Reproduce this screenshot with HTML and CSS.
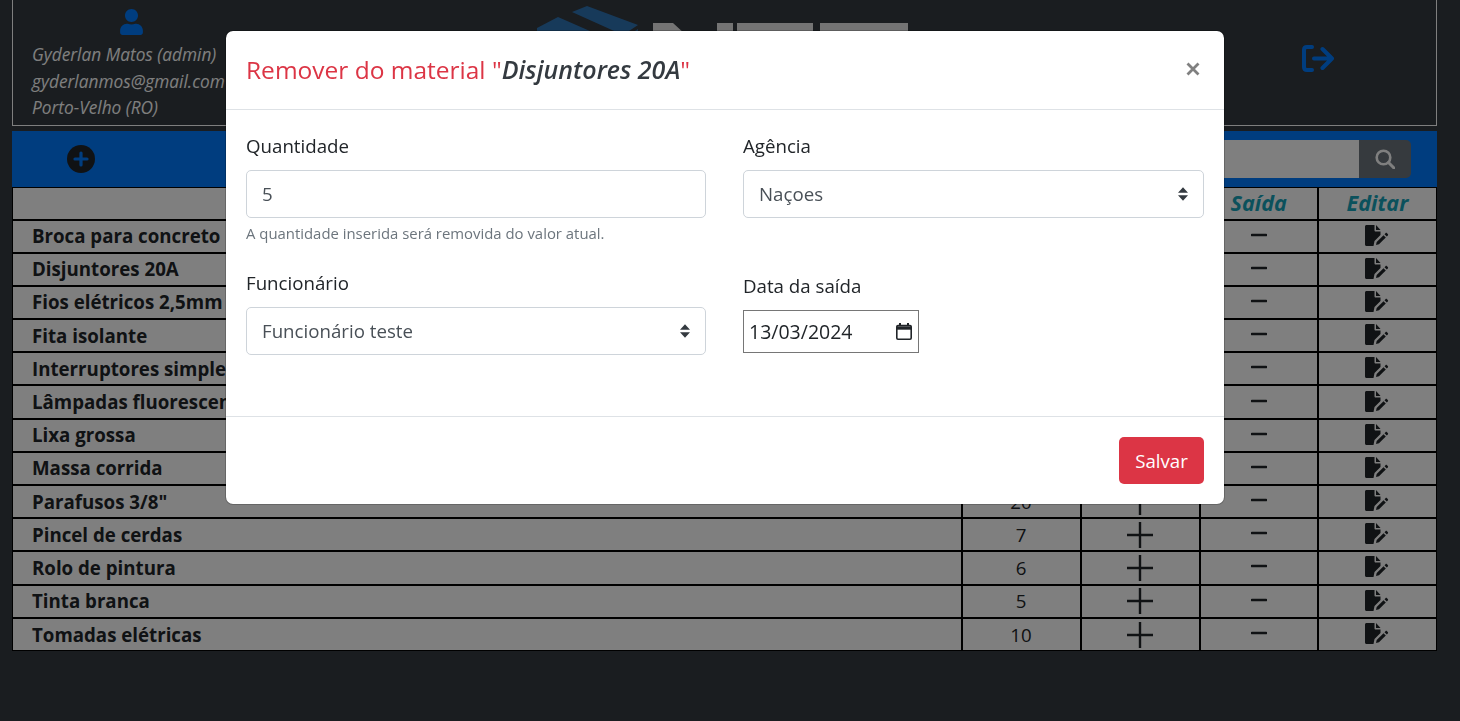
FILE: index.html
```html
<!DOCTYPE html>
<html lang="pt-BR">
<head>
    <meta charset="UTF-8">
    <meta name="viewport" content="width=device-width, initial-scale=1.0">
    <title>Materiais</title>
    <link rel="stylesheet" href="styles.css">
</head>
<body>

    <svg class="defs" aria-hidden="true">
        <symbol id="icon-plus" viewBox="0 0 26 26"><path d="M0 13H26M13 0V26" fill="none" stroke="currentColor" stroke-width="2.400"/></symbol>
        <symbol id="icon-minus" viewBox="0 0 16 4"><path d="M1 2H15" fill="none" stroke="currentColor" stroke-width="2.600" stroke-linecap="round"/></symbol>
        <symbol id="icon-edit" viewBox="0 0 24 21">
            <path d="M1.500 0H9.500V5.500C9.500 6 10 6.500 10.500 6.500H15.500V10L9.500 16L8.500 21H1.500C.7 21 0 20.300 0 19.500V1.500C0 .7 .7 0 1.500 0Z" fill="currentColor"/>
            <path d="M11 0L15.500 5H11Z" fill="currentColor"/>
            <path d="M11 20L11.700 17L18.500 10.200L20.800 12.500L14 19.300Z" fill="currentColor"/>
            <path d="M19.500 9.200L20.500 8.200C21 7.700 21.500 7.700 22 8.200L22.800 9C23.300 9.500 23.300 10 22.800 10.500L21.800 11.500Z" fill="currentColor"/>
        </symbol>
    </svg>

    <header class="top-box">
        <div class="user-info">
            <svg class="user-icon" viewBox="0 0 448 512"><path fill="currentColor" d="M224 256c70.700 0 128-57.300 128-128S294.700 0 224 0 96 57.300 96 128s57.300 128 128 128zm89.600 32h-16.700c-22.200 10.200-46.900 16-72.900 16s-50.600-5.800-72.900-16h-16.700C60.200 288 0 348.200 0 422.400V464c0 26.500 21.500 48 48 48h352c26.500 0 48-21.500 48-48v-41.600c0-74.200-60.200-134.400-134.400-134.400z"/></svg>
            <p>Gyderlan Matos (admin)</p>
            <p>gyderlanmos@gmail.com</p>
            <p>Porto-Velho (RO)</p>
        </div>
        <svg class="logo" viewBox="0 0 376 60" aria-label="Logo">
            <path fill="#2f74b5" d="M35 7L50 1L101 20L86 30Z"/>
            <path fill="#2f74b5" d="M0 23L21 12L62 30L40 50H0Z"/>
            <path fill="#2f74b5" d="M86 34L101 24V50H86Z"/>
            <path fill="#e8e8e8" d="M116 18H136L160 40H116ZM180 18H196V40H180ZM200 18H276V40H200ZM283 18H371V40H283Z"/>
        </svg>
        <svg class="logout-icon" viewBox="0 0 32 27">
            <path d="M10 2H5C3 2 2 3 2 5V22C2 24 3 25 5 25H10" fill="none" stroke="currentColor" stroke-width="4" stroke-linecap="round"/>
            <path d="M12 13.500H28M20.500 4L30 13.500L20.500 23" fill="none" stroke="currentColor" stroke-width="4" stroke-linecap="round" stroke-linejoin="round"/>
        </svg>
    </header>

    <div class="toolbar">
        <button class="add-btn" type="button" aria-label="Adicionar">
            <svg viewBox="0 0 28 28"><circle cx="14" cy="14" r="14" fill="currentColor"/><path d="M14 8V20M8 14H20" stroke="#007bff" stroke-width="3.200" stroke-linecap="round"/></svg>
        </button>
        <form class="search">
            <input type="text" aria-label="Buscar">
            <button type="button" aria-label="Buscar">
                <svg viewBox="0 0 20 20"><circle cx="8.500" cy="8.500" r="6.800" fill="none" stroke="currentColor" stroke-width="2.600"/><path d="M13.500 13.500L19 19" stroke="currentColor" stroke-width="3" stroke-linecap="round"/></svg>
            </button>
        </form>
    </div>

    <table class="materials">
        <thead>
            <tr><th>Material</th><th>Qtd</th><th>Entrada</th><th>Saída</th><th>Editar</th></tr>
        </thead>
        <tbody>
            <tr><td>Broca para concreto</td><td>12</td><td><svg class="plus"><use href="#icon-plus"/></svg></td><td><svg class="minus"><use href="#icon-minus"/></svg></td><td><svg class="edit"><use href="#icon-edit"/></svg></td></tr>
            <tr><td>Disjuntores 20A</td><td>15</td><td><svg class="plus"><use href="#icon-plus"/></svg></td><td><svg class="minus"><use href="#icon-minus"/></svg></td><td><svg class="edit"><use href="#icon-edit"/></svg></td></tr>
            <tr><td>Fios elétricos 2,5mm</td><td>30</td><td><svg class="plus"><use href="#icon-plus"/></svg></td><td><svg class="minus"><use href="#icon-minus"/></svg></td><td><svg class="edit"><use href="#icon-edit"/></svg></td></tr>
            <tr><td>Fita isolante</td><td>9</td><td><svg class="plus"><use href="#icon-plus"/></svg></td><td><svg class="minus"><use href="#icon-minus"/></svg></td><td><svg class="edit"><use href="#icon-edit"/></svg></td></tr>
            <tr><td>Interruptores simples</td><td>14</td><td><svg class="plus"><use href="#icon-plus"/></svg></td><td><svg class="minus"><use href="#icon-minus"/></svg></td><td><svg class="edit"><use href="#icon-edit"/></svg></td></tr>
            <tr><td>Lâmpadas fluorescentes</td><td>18</td><td><svg class="plus"><use href="#icon-plus"/></svg></td><td><svg class="minus"><use href="#icon-minus"/></svg></td><td><svg class="edit"><use href="#icon-edit"/></svg></td></tr>
            <tr><td>Lixa grossa</td><td>11</td><td><svg class="plus"><use href="#icon-plus"/></svg></td><td><svg class="minus"><use href="#icon-minus"/></svg></td><td><svg class="edit"><use href="#icon-edit"/></svg></td></tr>
            <tr><td>Massa corrida</td><td>8</td><td><svg class="plus"><use href="#icon-plus"/></svg></td><td><svg class="minus"><use href="#icon-minus"/></svg></td><td><svg class="edit"><use href="#icon-edit"/></svg></td></tr>
            <tr><td>Parafusos 3/8"</td><td>20</td><td><svg class="plus"><use href="#icon-plus"/></svg></td><td><svg class="minus"><use href="#icon-minus"/></svg></td><td><svg class="edit"><use href="#icon-edit"/></svg></td></tr>
            <tr><td>Pincel de cerdas</td><td>7</td><td><svg class="plus"><use href="#icon-plus"/></svg></td><td><svg class="minus"><use href="#icon-minus"/></svg></td><td><svg class="edit"><use href="#icon-edit"/></svg></td></tr>
            <tr><td>Rolo de pintura</td><td>6</td><td><svg class="plus"><use href="#icon-plus"/></svg></td><td><svg class="minus"><use href="#icon-minus"/></svg></td><td><svg class="edit"><use href="#icon-edit"/></svg></td></tr>
            <tr><td>Tinta branca</td><td>5</td><td><svg class="plus"><use href="#icon-plus"/></svg></td><td><svg class="minus"><use href="#icon-minus"/></svg></td><td><svg class="edit"><use href="#icon-edit"/></svg></td></tr>
            <tr><td>Tomadas elétricas</td><td>10</td><td><svg class="plus"><use href="#icon-plus"/></svg></td><td><svg class="minus"><use href="#icon-minus"/></svg></td><td><svg class="edit"><use href="#icon-edit"/></svg></td></tr>
        </tbody>
    </table>

    <div class="backdrop">
        <div class="modal">
            <div class="modal-header">
                <h5>Remover do material "<em>Disjuntores 20A</em>"</h5>
                <button class="close" type="button" aria-label="Fechar">
                    <svg viewBox="0 0 14 14"><path d="M1.500 1.500L12.500 12.500M12.500 1.500L1.500 12.500" stroke="currentColor" stroke-width="2.800"/></svg>
                </button>
            </div>
            <form class="modal-body">
                <div class="field">
                    <label for="quantidade">Quantidade</label>
                    <input class="control" id="quantidade" type="text" value="5">
                    <small>A quantidade inserida será removida do valor atual.</small>
                </div>
                <div class="field">
                    <label for="agencia">Agência</label>
                    <select class="control" id="agencia"><option>Naçoes</option></select>
                </div>
                <div class="field">
                    <label for="funcionario">Funcionário</label>
                    <select class="control" id="funcionario"><option>Funcionário teste</option></select>
                </div>
                <div class="field field-date">
                    <label for="data">Data da saída</label>
                    <div class="date-box">
                        <input id="data" type="text" value="13/03/2024">
                        <svg viewBox="0 0 16 17"><path d="M2 2.500H14C14.600 2.500 15.200 3.100 15.200 3.700V15C15.200 15.600 14.600 16.200 14 16.200H2C1.400 16.200 .8 15.600 .8 15V3.700C.8 3.100 1.400 2.500 2 2.500Z" fill="none" stroke="currentColor" stroke-width="1.600"/><path d="M.8 5H15.200" stroke="currentColor" stroke-width="3.400"/><path d="M4 0V3M12 0V3" stroke="currentColor" stroke-width="2"/></svg>
                    </div>
                </div>
            </form>
            <div class="modal-footer">
                <button class="save" type="button">Salvar</button>
            </div>
        </div>
    </div>

</body>
</html>
```

FILE: styles.css
```css
* {
    box-sizing: border-box;
}
body {
    margin: 0;
    padding: 0 23px 0 12px;
    height: 721px;
    overflow: hidden;
    background-color: #343a40;
    color: #212529;
    font-family: "Open Sans", "Noto Sans", sans-serif;
    font-size: 18.7px;
}
.defs {
    display: none;
}

/* top box */
.top-box {
    display: grid;
    grid-template-columns: 237px 1fr 237px;
    height: 126px;
    border: 1px solid #fff;
    border-top: none;
}
.user-info {
    padding: 9px 0 0 19px;
    color: #fff;
    font-style: italic;
    font-size: 17.3px;
    line-height: 26.5px;
    white-space: nowrap;
}
.user-info p {
    margin: 0;
}
.user-icon {
    display: block;
    width: 23px;
    height: 26px;
    margin: 0 0 7px 88px;
    color: #007bff;
}
.logo {
    justify-self: center;
    width: 376px;
    height: 60px;
    margin-top: 5px;
}
.logout-icon {
    justify-self: center;
    align-self: center;
    width: 32px;
    height: 27px;
    margin-top: -8px;
    color: #007bff;
}

/* toolbar */
.toolbar {
    display: flex;
    align-items: center;
    justify-content: space-between;
    height: 56px;
    margin-top: 5px;
    padding: 0 26px 0 55px;
    background-color: #007bff;
}
.add-btn {
    width: 28px;
    height: 28px;
    padding: 0;
    border: none;
    background: none;
    color: #212529;
}
.add-btn svg {
    display: block;
}
.search {
    display: flex;
    height: 38px;
    margin-top: -1px;
}
.search input {
    width: 420px;
    border: none;
    background-color: #fff;
}
.search button {
    display: flex;
    align-items: center;
    justify-content: center;
    width: 52px;
    padding: 0;
    border: none;
    border-radius: 0 5px 5px 0;
    background-color: #6c757d;
    color: #fff;
}
.search button svg {
    width: 20px;
    height: 20px;
}

/* table */
.materials {
    width: 100%;
    table-layout: fixed;
    border-collapse: collapse;
    background-color: #fff;
}
.materials th, .materials td {
    padding: 0;
    border: 2px solid #000;
    height: 33.2px;
    text-align: center;
    line-height: 26px;
}
.materials th {
    height: 32px;
    border-top-width: 1px;
    color: #17a2b8;
    font-size: 21.6px;
    font-style: italic;
    font-weight: 700;
}
.materials th:first-child {
    color: #fff;
}
.materials th:first-child, .materials td:first-child {
    border-left-width: 1px;
}
.materials th:last-child, .materials td:last-child {
    border-right-width: 1px;
}
.materials tr:last-child td {
    border-bottom-width: 1px;
}
.materials td:first-child {
    padding-left: 19px;
    text-align: left;
    font-weight: 700;
}
.materials th:nth-child(2), .materials th:nth-child(3) {
    width: 119px;
}
.materials th:nth-child(4) {
    width: 118.3px;
}
.materials th:nth-child(5) {
    width: 118.7px;
}
.materials svg {
    display: block;
    margin: 0 auto;
}
.plus {
    width: 26px;
    height: 26px;
}
.minus {
    width: 16px;
    height: 4px;
    margin-top: -3px !important;
}
.edit {
    width: 24px;
    height: 21px;
    margin-top: -2px !important;
}

/* modal */
.backdrop {
    position: fixed;
    top: 0;
    left: 0;
    right: 0;
    bottom: 0;
    padding: 30px 0 0 225px;
    background-color: rgba(0, 0, 0, 0.5);
}
.modal {
    width: 1000px;
    border-radius: 8px;
    background-color: #fff;
    border: 1px solid rgba(0, 0, 0, 0.2);
    background-clip: padding-box;
}
.modal-header {
    display: flex;
    align-items: center;
    justify-content: space-between;
    height: 79px;
    padding: 0 24px 2px 20px;
    border-bottom: 1px solid #dee2e6;
}
.modal-header h5 {
    margin: 0;
    color: #dc3545;
    font-size: 24.5px;
    font-weight: 500;
}
.modal-header em {
    color: #343a40;
    font-size: 25px;
    font-weight: 600;
}
.close {
    width: 14px;
    height: 14px;
    padding: 0;
    border: none;
    background: none;
    color: #808080;
}
.close svg {
    display: block;
}
.modal-body {
    display: grid;
    grid-template-columns: 460px 461px;
    column-gap: 37px;
    align-content: start;
    height: 306px;
    padding: 21px 20px 0;
}
.field {
    display: flex;
    flex-direction: column;
    align-items: flex-start;
}
.field label {
    line-height: 30px;
    margin-bottom: 9px;
}
.field small {
    margin: 5px 0 0;
    line-height: 21px;
    font-size: 14.9px;
    color: #6c757d;
}
.field:nth-child(-n+2) {
    height: 137px;
}
.control {
    width: 100%;
    height: 47.5px;
    padding: 0 15px;
    border: 1px solid #ced4da;
    border-radius: 5px;
    background-color: #fff;
    color: #495057;
    font: inherit;
}
select.control {
    appearance: none;
    background-image: url("data:image/svg+xml,%3Csvg xmlns='http://www.w3.org/2000/svg' width='10' height='14' viewBox='0 0 11 15'%3E%3Cpath fill='%23343a40' d='M5.500 0L11 6H0ZM5.500 15L0 9H11Z'/%3E%3C/svg%3E");
    background-repeat: no-repeat;
    background-position: right 15px center;
}
.field-date {
    padding-top: 3px;
}
.date-box {
    display: flex;
    align-items: center;
    width: 176px;
    height: 43px;
    border: 1px solid #767676;
    padding: 0 6px 0 5px;
}
.date-box input {
    width: 100%;
    padding: 0;
    border: none;
    color: #212529;
    font: inherit;
    font-size: 19.5px;
}
.date-box svg {
    flex: none;
    width: 16px;
    height: 17px;
}
.modal-footer {
    display: flex;
    justify-content: flex-end;
    padding: 20px;
    border-top: 1px solid #dee2e6;
}
.save {
    width: 85px;
    height: 47px;
    border: none;
    border-radius: 5px;
    background-color: #dc3545;
    color: #fff;
    font: inherit;
}
```
